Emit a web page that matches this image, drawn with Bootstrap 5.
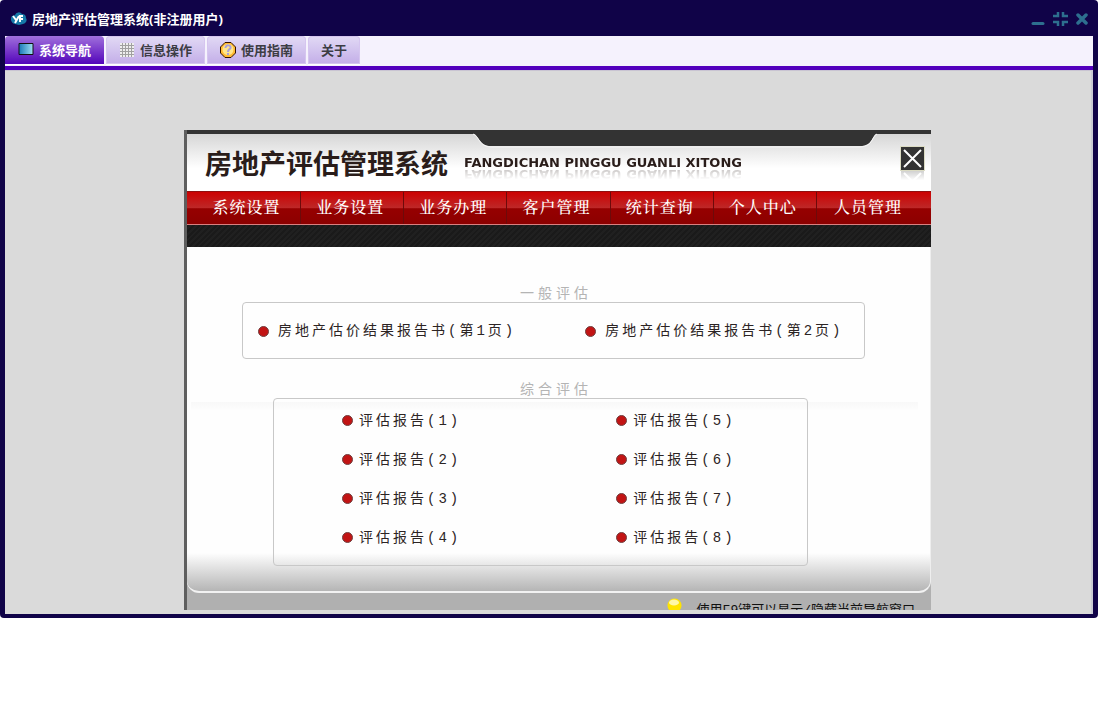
<!DOCTYPE html>
<html lang="zh-CN">
<head>
<meta charset="utf-8">
<meta name="viewport" content="width=device-width, initial-scale=1">
<title>房地产评估管理系统</title>
<link href="https://cdn.jsdelivr.net/npm/bootstrap@5.3.0/dist/css/bootstrap.min.css" rel="stylesheet">
<style>
body { font-family: "Open Sans", "Noto Sans CJK SC", sans-serif; font-size: 13px; line-height: 16px; background: #fff; }
a { color: inherit; text-decoration: none; }
.app-window { background: #100348; border-radius: 4px; padding: 0 5px 4px; margin-right: 1px; }
.title-bar { height: 36px; padding: 2px 5px 0; color: #fff; font-weight: 700; }
.title-bar h1 { font: inherit; }
.title-bar button { color: #2d6f8f; }
.tab-strip { background: #f5f2fd; border-bottom: 4px solid #5200bd; padding-bottom: 1px; gap: 2px; }
.tab-strip .nav-link { height: 29px; padding: 0 13px; gap: 5px; border: 0; border-radius: 4px 4px 0 0; color: #3c3c44; font-weight: 700; background: linear-gradient(#e2daf5, #c3aee8); border-bottom: 1px solid #fff; box-shadow: 0 0 0 1px #d5c5ef inset; }
.tab-strip .nav-link.active { color: #fff; background: linear-gradient(#a070dc, #7a3acb 50%, #5205ba); box-shadow: none; border-bottom: 1px solid #fff; }
.work-area { background: #dadada; padding: 59px 0 4px 19px; border-right: 2px solid #c9cad4; border-top: 1px solid #c9c4d2; }
.panel { max-width: 747px; border-left: 3px solid #5e5e5e; background: #b0b0b0; }
.banner { height: 61px; border-top: 4px solid #333; background: linear-gradient(#d6d6d6, #fff 60%); padding: 0 7px 0 18px; }
.notch { position: absolute; top: -1px; right: 54px; }
.brand-name { font: 700 27px/36px "Noto Sans CJK SC", sans-serif; color: #2a1d1a; }
.brand-latin { font: 700 13px/14px "DejaVu Sans", sans-serif; color: #2a1d1a; -webkit-box-reflect: below -3px linear-gradient(transparent 10%, rgba(0,0,0,.3)); }
.close-box { width: 23px; height: 23px; background: #333; outline: 1px solid #dcdcc4; -webkit-box-reflect: below 0 linear-gradient(transparent 55%, rgba(0,0,0,.25)); }
.menu-bar { height: 34px; border-top: 1px solid #8f1010; border-bottom: 1px solid #d98080; background: linear-gradient(#cc0202, #bd2828 50%, #960000 52%, #8c0000); font: 500 16px/30px "Noto Serif CJK SC", "Noto Sans CJK SC", serif; letter-spacing: 1px; color: #fff; }
.menu-bar a { display: block; height: 32px; text-align: center; padding-right: 4px; }
.menu-bar li { flex: 103 1 0; }
.menu-bar li:first-child { flex-grow: 114; }
.menu-bar li:first-child a { padding: 0 0 0 6px; }
.menu-bar li:last-child { flex-grow: 115; }
.menu-bar li:last-child a { padding-right: 12px; }
.menu-bar li + li { border-left: 1px solid #6d0a0a; }
.shade { height: 22px; background: repeating-linear-gradient(135deg, #1a1a1a 0 2px, #202020 2px 4px); }
.sheet { padding: 36px 65px 25px 55px; border-bottom: 2px solid #f2f2f2; border-right: 1px solid #eee; border-radius: 0 0 12px 12px; background: linear-gradient(transparent calc(100% - 38px), #b5b5b5), linear-gradient(#f8f8f8, #fdfdfd) 4px 155px / calc(100% - 16px) 8px no-repeat, #fefefe; }
.sheet h2 { font: 14px/18px "Noto Sans CJK SC", sans-serif; letter-spacing: 4px; color: #b4b4b4; text-align: center; margin: 0; padding: 0 0 1px 5px; }
.frame { border: 1px solid #c8c8c8; border-radius: 4px; }
.report { display: flex; align-items: center; font: 14px/20px "Liberation Mono", "Noto Sans CJK SC", monospace; letter-spacing: 3px; color: #2c2424; white-space: nowrap; }
.report::before { content: ""; width: 11px; height: 11px; border-radius: 50%; background: #c21414; border: 1px solid #704040; margin-right: 9px; flex: none; }
.frame-general { display: grid; grid-template-columns: 54% 46%; padding: 18px 0 17px 15px; margin-bottom: 20px; }
.frame-full { display: grid; grid-template-columns: 59% 41%; grid-auto-rows: 39px; padding: 2px 0 8px 68px; margin: 0 57px 0 31px; }
.frame-full .report::before { margin-right: 6px; }
.hint { height: 17px; overflow: hidden; padding: 5px 16px 0 0; gap: 15px; color: #111; font: 13px/16px "Liberation Mono", "Noto Sans CJK SC", monospace; }
.hint p { padding-top: 5px; margin: 0; }
.hint svg { flex: none; }
</style>
</head>
<body>
<div class="app-window">
  <header class="title-bar d-flex align-items-center">
    <svg class="me-1" width="18" height="14" viewBox="0 0 18 14" aria-hidden="true"><path d="M5 3a4 4 0 0 1 7-1 4 4 0 0 1 4 4 4 4 0 0 1-3 6l-4 1-4-1a5 5 0 0 1-3-8z" fill="#1679a8"/><path d="M3 4l3 4m3-4l-4 7M13 4h-3v6m0-3h3" stroke="#fff" stroke-width="2" fill="none"/></svg>
    <h1 class="mb-0 me-auto">房地产评估管理系统(非注册用户)</h1>
    <div class="d-flex gap-2">
      <button class="btn p-0 border-0 d-flex" aria-label="最小化"><svg width="14" height="14"><path d="M2 11.500h10" stroke="currentColor" stroke-width="3" stroke-linecap="round"/></svg></button>
      <button class="btn p-0 border-0 d-flex" aria-label="还原"><svg width="15" height="14"><path d="M0 4h5V0M10 0v4h5M0 10h5v4M10 14v-4h5" stroke="currentColor" stroke-width="2.500" fill="none"/></svg></button>
      <button class="btn p-0 border-0 d-flex" aria-label="关闭"><svg width="12" height="14"><path d="M2 3l8 8m0-8l-8 8" stroke="currentColor" stroke-width="3.500" stroke-linecap="round"/></svg></button>
    </div>
  </header>
  <nav class="nav tab-strip">
    <a class="nav-link active d-flex align-items-center" href="#"><svg width="16" height="16" aria-hidden="true"><defs><linearGradient id="screen"><stop stop-color="#1878b8"/><stop offset="1" stop-color="#a0e0f4"/></linearGradient></defs><path d="M1 1.500h14v11H1z" fill="url(#screen)" stroke="#111"/></svg>系统导航</a>
    <a class="nav-link d-flex align-items-center" href="#"><svg width="16" height="16" aria-hidden="true"><path d="M1 1h14v14H1z" fill="#eee"/><path d="M1 3.500h14m-14 3h14m-14 3h14m-14 3h14M3.500 1v14m3-14v14m3-14v14m3-14v14" stroke="#a0a0a0"/></svg>信息操作</a>
    <a class="nav-link d-flex align-items-center" href="#"><svg width="16" height="16" aria-hidden="true"><path d="M5 .500h6l4.500 4.500v6L11 15.500H5L.500 11V5z" fill="#fb3" stroke="#310"/><circle cx="8" cy="7.500" r="5.500" fill="#ffe58a"/><path d="M5.500 6c0-4 6-3 5 0-1 2-2.500 1-2.500 4m0 1v2" stroke="#a9a0d8" stroke-width="2" fill="none"/></svg>使用指南</a>
    <a class="nav-link d-flex align-items-center" href="#">关于</a>
  </nav>
  <main class="work-area">
    <section class="panel mx-auto">
      <div class="banner position-relative d-flex align-items-center">
        <svg class="notch" width="404" height="16" aria-hidden="true"><path d="M0 0h404c-5 2-4 13-17 13H18C6 13 6 2 0 0z" fill="#333"/><path d="M0 1c6 2 6 13 18 13h369c13 0 12-11 17-13" fill="none" stroke="#f6f6f6"/></svg>
        <div class="brand-name">房地产评估管理系统</div>
        <div class="brand-latin ms-3 me-auto">FANGDICHAN PINGGU GUANLI XITONG</div>
        <button class="btn close-box rounded-0 border-0 p-0 d-flex mb-2" aria-label="关闭导航"><svg width="23" height="23"><path d="M3 3l17 17M20 3L3 20" stroke="#fff" stroke-width="2"/></svg></button>
      </div>
      <ul class="menu-bar d-flex list-unstyled mb-0">
        <li><a href="#">系统设置</a></li><li><a href="#">业务设置</a></li><li><a href="#">业务办理</a></li><li><a href="#">客户管理</a></li><li><a href="#">统计查询</a></li><li><a href="#">个人中心</a></li><li><a href="#">人员管理</a></li>
      </ul>
      <div class="shade"></div>
      <div class="sheet">
        <h2>一般评估</h2>
        <div class="frame frame-general">
          <a class="report" href="#">房地产估价结果报告书(第1页)</a>
          <a class="report" href="#">房地产估价结果报告书(第2页)</a>
        </div>
        <h2>综合评估</h2>
        <div class="frame frame-full">
          <a class="report" href="#">评估报告(1)</a><a class="report" href="#">评估报告(5)</a>
          <a class="report" href="#">评估报告(2)</a><a class="report" href="#">评估报告(6)</a>
          <a class="report" href="#">评估报告(3)</a><a class="report" href="#">评估报告(7)</a>
          <a class="report" href="#">评估报告(4)</a><a class="report" href="#">评估报告(8)</a>
        </div>
      </div>
      <div class="hint d-flex justify-content-end align-items-start">
        <svg width="15" height="20" aria-hidden="true"><circle cx="7.500" cy="7.500" r="7" fill="#ffe400"/><ellipse cx="7" cy="4.500" rx="5" ry="3" fill="#fff8a8"/></svg>
        <p>使用F9键可以显示/隐藏当前导航窗口</p>
      </div>
    </section>
  </main>
</div>
<script src="https://cdn.jsdelivr.net/npm/bootstrap@5.3.0/dist/js/bootstrap.bundle.min.js"></script>
</body>
</html>
